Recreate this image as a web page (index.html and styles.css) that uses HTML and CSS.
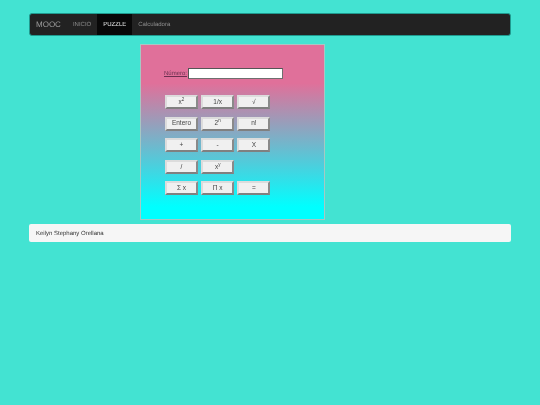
FILE: index.html
```html
<!DOCTYPE html>
<html lang="en">
<head>
    <meta charset="UTF-8">
    <title>Puzzle</title>
    <link rel="stylesheet" href="styles.css">
</head>
<body>
    <div class="container">
        <!-- Navbar -->
        <nav class="navbar">
            <a class="brand">MOOC</a>
            <a class="nav-link">INICIO</a>
            <a class="nav-link active">PUZZLE</a>
            <a class="nav-link">Calculadora</a>
        </nav>

        <!-- Calculator -->
        <div class="panel">
            <div class="number-row">
                <label class="number-label" for="numero">Número:</label>
                <input type="text" id="numero" class="number-input">
            </div>
            <div class="keys">
                <button class="key">x<sup>2</sup></button>
                <button class="key">1/x</button>
                <button class="key">√</button>
                <button class="key">Entero</button>
                <button class="key">2<sup>n</sup></button>
                <button class="key">n!</button>
                <button class="key">+</button>
                <button class="key">-</button>
                <button class="key">X</button>
                <button class="key">/</button>
                <button class="key">x<sup>y</sup></button>
                <span></span>
                <button class="key">Σ x</button>
                <button class="key">Π x</button>
                <button class="key">=</button>
            </div>
        </div>

        <!-- Footer -->
        <div class="footer">Keilyn Stephany Orellana</div>
    </div>
</body>
</html>
```

FILE: styles.css
```css
body { margin: 0; background-color: #43e3d2; font-family: "Liberation Sans", Arial, sans-serif; text-rendering: geometricPrecision; }
.container { padding: 13px 29px 0; will-change: transform; }

.navbar { display: flex; align-items: stretch; height: 23px; padding-left: 6px; box-sizing: border-box; background-color: #222; border: 1px solid #1f9a8f; border-radius: 3px; }
.brand { font-size: 8px; line-height: 22px; color: #9d9d9d; margin-right: 6px; }
.nav-link { font-size: 6px; line-height: 22px; padding: 0 6px; color: #8f8f8f; }
.nav-link.active { background-color: #080808; color: #e6e6e6; }

.panel { width: 185px; height: 176px; margin: 8px 0 4px 111px; padding: 23px 0 0 24px; box-sizing: border-box; border: 1px solid #a6c8c4; background: linear-gradient(#e0709a 0%, #e0709a 22%, #00ffff 93%, #00ffff 100%); }
.number-row { display: flex; align-items: center; height: 11px; margin-left: -1px; }
.number-label { font-size: 6px; color: #6b3050; text-decoration: underline; margin-right: 1px; }
.number-input { width: 95px; height: 11px; padding: 0; box-sizing: border-box; background: #fff; border: 1px solid #6f6f6f; border-top-color: #555; border-left-color: #555; }

.keys { display: grid; grid-template-columns: repeat(3, 33px); grid-auto-rows: 14px; column-gap: 3.2px; row-gap: 7.6px; margin-top: 16px; }
.key { padding: 0; font-family: inherit; font-size: 6.5px; line-height: 1; color: #444; background-color: #f0f0f0; border: 2px solid; border-color: #dcdcdc #8a8a8a #808080 #dcdcdc; cursor: pointer; }
.key sup { font-size: 4.5px; line-height: 0; }

.footer { height: 18px; padding-left: 7px; box-sizing: border-box; font-size: 6px; line-height: 20px; color: #333; background-color: #f6f6f6; border-radius: 2px; }
```
